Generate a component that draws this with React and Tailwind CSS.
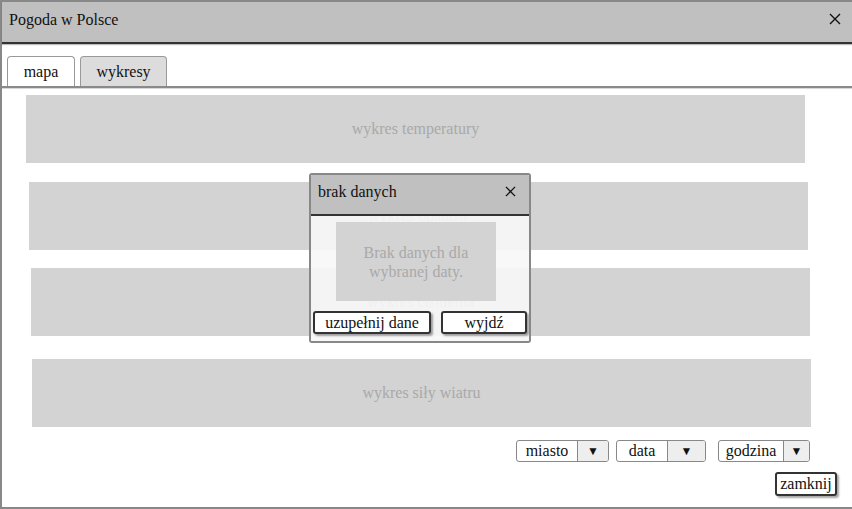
import React from "react";

const serif = { fontFamily: '"Liberation Serif", "Times New Roman", serif' };

function Cross({ size = 12 }) {
  return (
    <svg width={size} height={size} viewBox="0 0 12 12" className="block">
      <path d="M1 1 L11 11 M11 1 L1 11" stroke="#111" strokeWidth="1.4" fill="none" />
    </svg>
  );
}

function Chart({ label, className }) {
  return (
    <div
      className={`h-[68px] w-[779px] bg-[#d3d3d3] flex items-center justify-center text-[16px] text-[#a9a9a9] ${className}`}
    >
      {label}
    </div>
  );
}

function Select({ label, textW, btnW, className = "" }) {
  return (
    <div
      className={`flex h-[22px] border-[1.5px] border-[#888] rounded-[3px] overflow-hidden bg-white text-[16px] text-[#111] ${className}`}
    >
      <div className="flex items-center justify-center leading-none" style={{ width: textW }}>
        {label}
      </div>
      <div
        className="flex items-center justify-center bg-[#eeeeee] border-l border-[#888] text-[12px]"
        style={{ width: btnW }}
      >
        ▼
      </div>
    </div>
  );
}

export default function App() {
  return (
    <div className="relative w-[852px] h-[509px] overflow-hidden bg-white" style={serif}>
      <div className="w-[880px] h-[509px] border-l-2 border-t-2 border-b-2 border-[#888] flex flex-col">
        {/* header */}
        <div className="h-[42px] bg-[#c0c0c0] border-b-2 border-[#333] flex items-center justify-between pl-[7px] pr-[39px] shadow-[0_1px_1px_rgba(0,0,0,0.25)] shrink-0">
          <span className="text-[16px] text-[#111] -mt-[5px]">Pogoda w Polsce</span>
          <span className="-mt-[6px]">
            <Cross size={12} />
          </span>
        </div>
        {/* tabs */}
        <div className="flex items-end gap-[5px] pl-[5px] mt-[14px] h-[30px] border-b-2 border-[#8a8a8a] shrink-0">
          <div className="h-[30px] w-[68px] bg-white border border-b-0 border-[#999] rounded-t-[4px] flex items-center justify-center text-[16px] text-[#111]">
            mapa
          </div>
          <div className="h-[30px] w-[87px] bg-[#dcdcdc] border border-b-0 border-[#999] rounded-t-[4px] flex items-center justify-center text-[16px] text-[#111]">
            wykresy
          </div>
        </div>
        <div className="h-px bg-[#d8d8d8] w-full shrink-0" />
        {/* charts */}
        <div className="flex flex-col">
          <Chart label="wykres temperatury" className="ml-[24px] mt-[6px]" />
          <Chart label="wykres opadów" className="ml-[27px] mt-[19px]" />
          <Chart label="wykres ciśnienia" className="ml-[29px] mt-[18px]" />
          <Chart label="wykres siły wiatru" className="ml-[30px] mt-[23px]" />
        </div>
        {/* selects */}
        <div className="flex ml-[514px] mt-[13px]">
          <Select label="miasto" textW={60} btnW={31} />
          <Select label="data" textW={50} btnW={38} className="ml-[7px]" />
          <Select label="godzina" textW={64} btnW={26} className="ml-[12px]" />
        </div>
        <div className="ml-[773px] mt-[10px]">
          <div className="inline-flex h-[24px] w-[62px] items-center justify-center border-2 border-[#333] rounded-[3px] bg-white text-[16px] text-[#111] shadow-[2px_2px_2px_rgba(0,0,0,0.35)]">
            zamknij
          </div>
        </div>
      </div>

      {/* dialog */}
      <div className="absolute left-[309px] top-[173px] w-[222px] h-[170px] border-2 border-[#888] rounded-[3px] flex flex-col overflow-hidden">
        <div className="h-[41px] bg-[#c0c0c0] border-b-2 border-[#333] flex items-center justify-between pl-[7px] pr-[13px] shrink-0">
          <span className="text-[16px] text-[#111] -mt-[6px]">brak danych</span>
          <span className="-mt-[7px]">
            <Cross size={11} />
          </span>
        </div>
        <div className="flex-1 bg-[#f7f7f7]/90 flex flex-col">
          <div className="ml-[25px] mt-[6px] w-[160px] h-[79px] bg-[#d3d3d3] flex items-center justify-center text-center text-[16px] leading-[19px] text-[#a9a9a9]">
            Brak danych dla
            <br />
            wybranej daty.
          </div>
          <div className="flex gap-[10px] ml-[2px] mt-[10px]">
            <div className="h-[23px] w-[118px] flex items-center justify-center border-2 border-[#333] rounded-[3px] bg-white text-[16px] text-[#111] shadow-[2px_2px_2px_rgba(0,0,0,0.35)]">
              uzupełnij dane
            </div>
            <div className="h-[23px] w-[86px] flex items-center justify-center border-2 border-[#333] rounded-[3px] bg-white text-[16px] text-[#111] shadow-[2px_2px_2px_rgba(0,0,0,0.35)]">
              wyjdź
            </div>
          </div>
        </div>
      </div>
    </div>
  );
}
